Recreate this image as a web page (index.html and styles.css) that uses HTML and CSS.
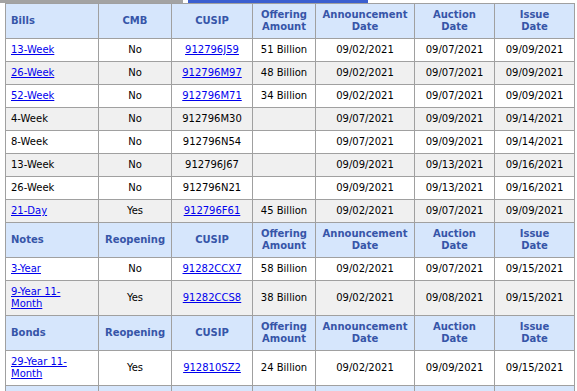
FILE: index.html
```html
<!DOCTYPE html>
<html>
<head>
<meta charset="utf-8">
<link rel="stylesheet" href="styles.css">
</head>
<body>
<div class="tabs"><span class="tab tab-gray"></span><span class="tab tab-blue"></span></div>
<table class="auctions">
  <colgroup>
    <col class="c1"><col class="c2"><col class="c3"><col class="c4"><col class="c5"><col class="c6"><col class="c7">
  </colgroup>
  <tbody>
    <tr class="head">
      <th class="first">Bills</th><th>CMB</th><th>CUSIP</th><th>Offering<br>Amount</th><th>Announcement<br>Date</th><th>Auction<br>Date</th><th>Issue<br>Date</th>
    </tr>
    <tr class="odd"><td class="first"><a href="#">13-Week</a></td><td>No</td><td><a href="#">912796J59</a></td><td>51 Billion</td><td>09/02/2021</td><td>09/07/2021</td><td>09/09/2021</td></tr>
    <tr class="even"><td class="first"><a href="#">26-Week</a></td><td>No</td><td><a href="#">912796M97</a></td><td>48 Billion</td><td>09/02/2021</td><td>09/07/2021</td><td>09/09/2021</td></tr>
    <tr class="odd"><td class="first"><a href="#">52-Week</a></td><td>No</td><td><a href="#">912796M71</a></td><td>34 Billion</td><td>09/02/2021</td><td>09/07/2021</td><td>09/09/2021</td></tr>
    <tr class="even"><td class="first">4-Week</td><td>No</td><td>912796M30</td><td></td><td>09/07/2021</td><td>09/09/2021</td><td>09/14/2021</td></tr>
    <tr class="odd"><td class="first">8-Week</td><td>No</td><td>912796N54</td><td></td><td>09/07/2021</td><td>09/09/2021</td><td>09/14/2021</td></tr>
    <tr class="even"><td class="first">13-Week</td><td>No</td><td>912796J67</td><td></td><td>09/09/2021</td><td>09/13/2021</td><td>09/16/2021</td></tr>
    <tr class="odd"><td class="first">26-Week</td><td>No</td><td>912796N21</td><td></td><td>09/09/2021</td><td>09/13/2021</td><td>09/16/2021</td></tr>
    <tr class="even"><td class="first"><a href="#">21-Day</a></td><td>Yes</td><td><a href="#">912796F61</a></td><td>45 Billion</td><td>09/02/2021</td><td>09/07/2021</td><td>09/09/2021</td></tr>
    <tr class="head">
      <th class="first">Notes</th><th>Reopening</th><th>CUSIP</th><th>Offering<br>Amount</th><th>Announcement<br>Date</th><th>Auction<br>Date</th><th>Issue<br>Date</th>
    </tr>
    <tr class="odd"><td class="first"><a href="#">3-Year</a></td><td>No</td><td><a href="#">91282CCX7</a></td><td>58 Billion</td><td>09/02/2021</td><td>09/07/2021</td><td>09/15/2021</td></tr>
    <tr class="even"><td class="first"><a href="#">9-Year 11-Month</a></td><td>Yes</td><td><a href="#">91282CCS8</a></td><td>38 Billion</td><td>09/02/2021</td><td>09/08/2021</td><td>09/15/2021</td></tr>
    <tr class="head">
      <th class="first">Bonds</th><th>Reopening</th><th>CUSIP</th><th>Offering<br>Amount</th><th>Announcement<br>Date</th><th>Auction<br>Date</th><th>Issue<br>Date</th>
    </tr>
    <tr class="odd"><td class="first"><a href="#">29-Year 11-Month</a></td><td>Yes</td><td><a href="#">912810SZ2</a></td><td>24 Billion</td><td>09/02/2021</td><td>09/09/2021</td><td>09/15/2021</td></tr>
    <tr class="head">
      <th class="first"></th><th></th><th></th><th></th><th></th><th></th><th></th>
    </tr>
  </tbody>
</table>
</body>
</html>
```
FILE: styles.css
```css
html, body {
  margin: 0;
  padding: 0;
  background: #ffffff;
}
body {
  font-family: "DejaVu Sans", Verdana, sans-serif;
  font-size: 10px;
  line-height: 12px;
  color: #000000;
  overflow: hidden;
}
.tabs {
  display: flex;
  height: 3px;
}
.tab {
  display: block;
  height: 3px;
}
.tab-gray {
  width: 183px;
  background: #a3a3a3;
}
.tab-blue {
  width: 180px;
  margin-left: 5px;
  background: #3b5fd0;
}
.auctions {
  border-collapse: collapse;
  table-layout: fixed;
  width: 570px;
  margin-left: 5px;
}
.c1 { width: 93px; }
.c2 { width: 73px; }
.c3 { width: 81px; }
.c4 { width: 63px; }
.c5 { width: 99px; }
.c6 { width: 80px; }
.c7 { width: 80px; }
.auctions th,
.auctions td {
  border: 1px solid #a0a0a0;
  padding: 5px 5px;
  text-align: center;
  vertical-align: middle;
}
.auctions th {
  background: #d6e6fc;
  color: #3655a8;
  font-weight: bold;
}
.auctions .first {
  text-align: left;
  padding-right: 9px;
}
.head th:empty {
  height: 24px;
}
.odd td { background: #ffffff; }
.even td { background: #f0f0f0; }
.auctions a {
  color: #0000ee;
  text-decoration: underline;
}
```
